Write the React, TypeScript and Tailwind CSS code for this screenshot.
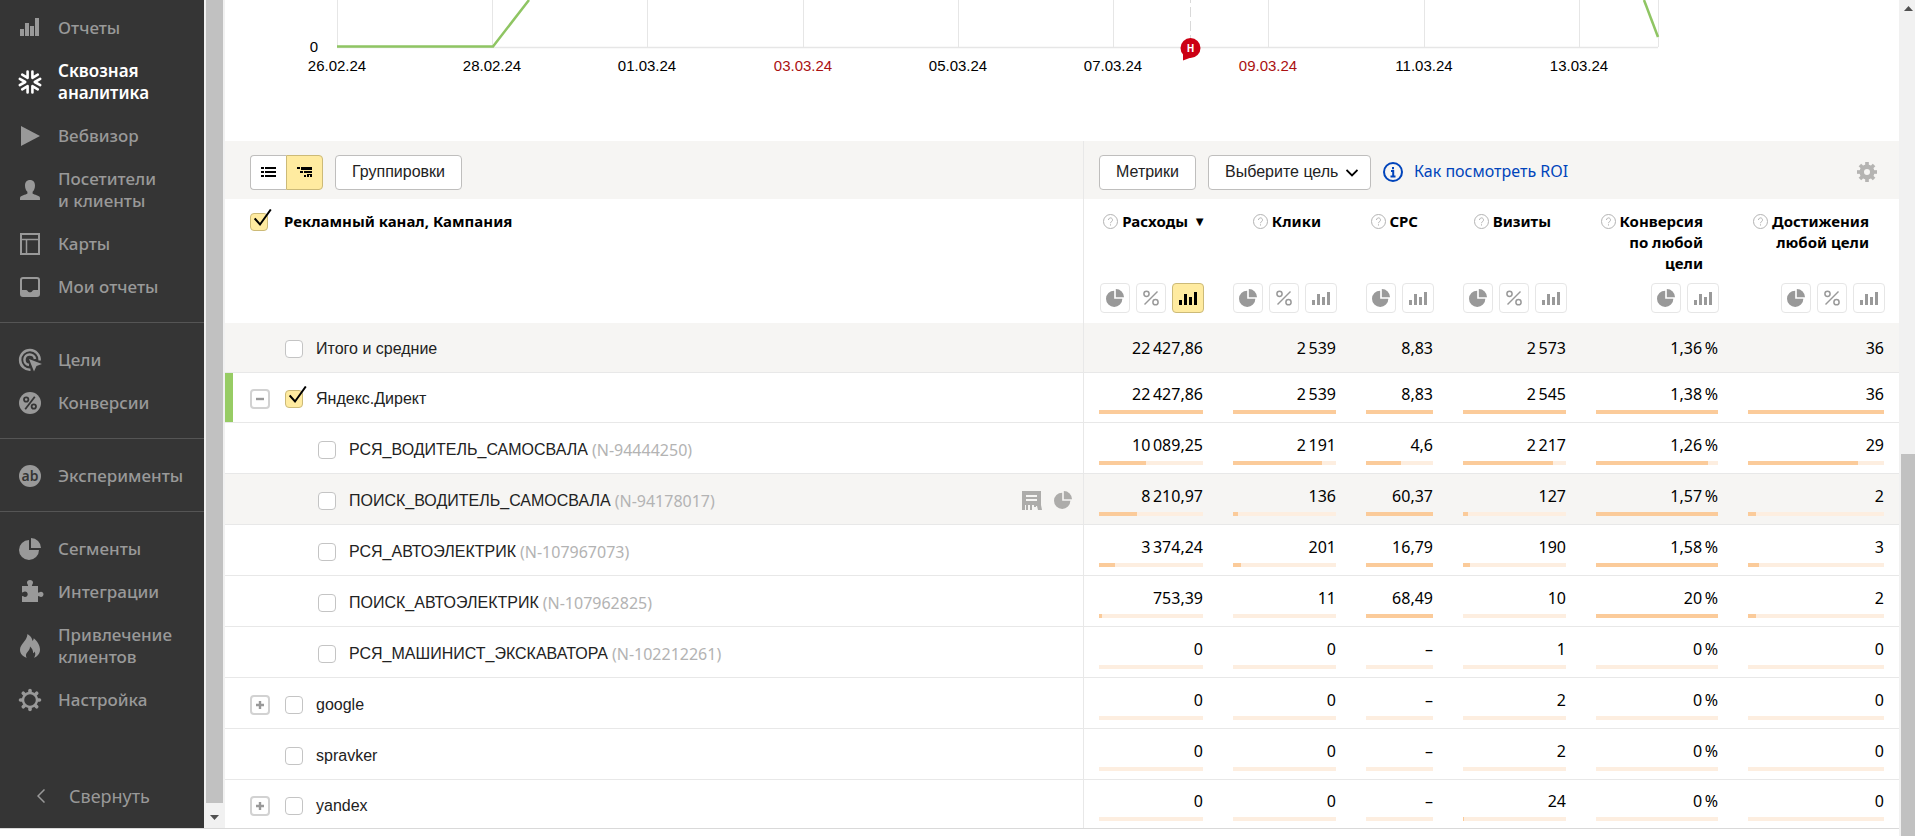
import type { ReactNode } from 'react'

type Mode = 'share' | 'percent' | 'bars'

type Row = {
  id: string
  label: string
  code?: string
  level: 0 | 1
  toggle?: 'open' | 'closed'
  checked?: boolean
  hovered?: boolean
  values: string[]
  bars?: number[]
}

const metrics: { title: string; width: string; modes: Mode[]; sorted?: boolean }[] = [
  { title: 'Расходы', width: 'w-[134px]', modes: ['share', 'percent', 'bars'], sorted: true },
  { title: 'Клики', width: 'w-[133px]', modes: ['share', 'percent', 'bars'] },
  { title: 'CPC', width: 'w-[97px]', modes: ['share', 'bars'] },
  { title: 'Визиты', width: 'w-[133px]', modes: ['share', 'percent', 'bars'] },
  { title: 'Конверсия по любой цели', width: 'w-[152px]', modes: ['share', 'bars'] },
  { title: 'Достижения любой цели', width: 'w-[166px]', modes: ['share', 'percent', 'bars'] },
]

const rows: Row[] = [
  { id: 'total', label: 'Итого и средние', level: 0, values: ['22\u2009427,86', '2\u2009539', '8,83', '2\u2009573', '1,36\u2009%', '36'] },
  { id: 'direct', label: 'Яндекс.Директ', level: 0, toggle: 'open', checked: true, values: ['22\u2009427,86', '2\u2009539', '8,83', '2\u2009545', '1,38\u2009%', '36'], bars: [100, 100, 100, 100, 100, 100] },
  { id: 'c1', label: 'РСЯ_ВОДИТЕЛЬ_САМОСВАЛА', code: '(N-94444250)', level: 1, values: ['10\u2009089,25', '2\u2009191', '4,6', '2\u2009217', '1,26\u2009%', '29'], bars: [45, 86, 52, 87, 92, 81] },
  { id: 'c2', label: 'ПОИСК_ВОДИТЕЛЬ_САМОСВАЛА', code: '(N-94178017)', level: 1, hovered: true, values: ['8\u2009210,97', '136', '60,37', '127', '1,57\u2009%', '2'], bars: [37, 5, 100, 5, 100, 6] },
  { id: 'c3', label: 'РСЯ_АВТОЭЛЕКТРИК', code: '(N-107967073)', level: 1, values: ['3\u2009374,24', '201', '16,79', '190', '1,58\u2009%', '3'], bars: [15, 8, 100, 7, 100, 8] },
  { id: 'c4', label: 'ПОИСК_АВТОЭЛЕКТРИК', code: '(N-107962825)', level: 1, values: ['753,39', '11', '68,49', '10', '20\u2009%', '2'], bars: [3, 0, 100, 0, 100, 6] },
  { id: 'c5', label: 'РСЯ_МАШИНИСТ_ЭКСКАВАТОРА', code: '(N-102212261)', level: 1, values: ['0', '0', '–', '1', '0\u2009%', '0'], bars: [0, 0, 0, 0, 0, 0] },
  { id: 'google', label: 'google', level: 0, toggle: 'closed', values: ['0', '0', '–', '2', '0\u2009%', '0'], bars: [0, 0, 0, 0, 0, 0] },
  { id: 'spravker', label: 'spravker', level: 0, values: ['0', '0', '–', '2', '0\u2009%', '0'], bars: [0, 0, 0, 0, 0, 0] },
  { id: 'yandex', label: 'yandex', level: 0, toggle: 'closed', values: ['0', '0', '–', '24', '0\u2009%', '0'], bars: [0, 0, 0, 1, 0, 0] },
]

const dates = [
  { x: 112, label: '26.02.24' },
  { x: 267, label: '28.02.24' },
  { x: 422, label: '01.03.24' },
  { x: 578, label: '03.03.24', holiday: true },
  { x: 733, label: '05.03.24' },
  { x: 888, label: '07.03.24' },
  { x: 1043, label: '09.03.24', holiday: true },
  { x: 1199, label: '11.03.24' },
  { x: 1354, label: '13.03.24' },
]

function Icon({ children }: { children: ReactNode }) {
  return (
    <svg className="h-[22px] w-[22px] shrink-0 overflow-visible" viewBox="0 0 22 22" fill="currentColor" aria-hidden="true">
      {children}
    </svg>
  )
}

const piePath = (
  <>
    <path d="M10 2v10h10A10 10 0 1 1 10 2Z" />
    <path d="M12 0a10 10 0 0 1 10 10H12Z" />
  </>
)

type NavItem = { label: string; active?: boolean; twoLines?: boolean; icon: ReactNode }

const navGroups: NavItem[][] = [
  [
    { label: 'Отчеты', icon: <path d="M1 12h4v7H1zM6 6h4v13H6zM11 9h4v10h-4zM16 1h4v18h-4z" /> },
    {
      label: 'Сквозная аналитика',
      active: true,
      twoLines: true,
      icon: (
        <g fill="none" stroke="currentColor" strokeWidth="2.600" strokeLinecap="round" strokeLinejoin="round">
          {[0, 60, 120, 180, 240, 300].map((a) => (
            <path key={a} d="M21.200 7.900 15.800 11 21.200 14.100" transform={`rotate(${a} 11 11)`} />
          ))}
        </g>
      ),
    },
    { label: 'Вебвизор', icon: <path d="M2 1l19 10L2 21z" /> },
    {
      label: 'Посетители и клиенты',
      twoLines: true,
      icon: <path d="M11 1c3.200 0 5 2.200 5 5.500 0 2.600-1 5-2.400 6.300v1.700c0 .8 5.400 1.600 7 3.200.4.500.4 1.500.4 3.300H1c0-1.800 0-2.800.4-3.300 1.600-1.600 7-2.400 7-3.200v-1.700C7 11.500 6 9.100 6 6.500 6 3.200 7.800 1 11 1Z" />,
    },
    {
      label: 'Карты',
      icon: (
        <>
          <path d="M2 1h18v20H2z" fill="none" stroke="currentColor" strokeWidth="2" />
          <path d="M2 6.500h18M7.500 6.500V21" fill="none" stroke="currentColor" strokeWidth="1.500" />
        </>
      ),
    },
    {
      label: 'Мои отчеты',
      icon: <path fillRule="evenodd" d="M4 1h14a3 3 0 0 1 3 3v14a3 3 0 0 1-3 3H4a3 3 0 0 1-3-3V4a3 3 0 0 1 3-3Zm0 2a1 1 0 0 0-1 1v10h4c.8 0 1.200.3 1.500.8 1.200 2 3.800 2 5 0 .3-.5.7-.8 1.500-.8h4V4a1 1 0 0 0-1-1Z" />,
    },
  ],
  [
    {
      label: 'Цели',
      icon: (
        <>
          <g fill="none" stroke="currentColor" strokeWidth="2.500">
            <path d="M20.700 11.500A9.800 9.800 0 1 0 11.500 20.700" />
            <path d="M16 10A5.300 5.300 0 1 0 10 16" />
          </g>
          <path d="M10 10l13 5-5.500 2L15 22.500z" />
        </>
      ),
    },
    {
      label: 'Конверсии',
      icon: (
        <>
          <circle cx="11" cy="11" r="11" />
          <g fill="none" stroke="#353535" strokeWidth="1.800">
            <circle cx="7.200" cy="7.500" r="2.200" />
            <circle cx="14.800" cy="14.500" r="2.200" />
            <path d="M15.800 4.800 6.200 17.200" />
          </g>
        </>
      ),
    },
  ],
  [
    {
      label: 'Эксперименты',
      icon: (
        <>
          <circle cx="11" cy="11" r="11" />
          <text x="11" y="16" textAnchor="middle" fontSize="14" fontWeight="600" fill="#353535">ab</text>
        </>
      ),
    },
  ],
  [
    { label: 'Сегменты', icon: piePath },
    {
      label: 'Интеграции',
      icon: <path d="M3 5h5.500c.6 0 .7-.5.400-1C8.400 3 8 2.300 8 1.700 8 .1 9.200-1 11-1s3 1.100 3 2.700c0 .6-.4 1.300-.9 2.300-.3.500-.2 1 .4 1H19v6c0 .6.500.8 1 .5.800-.5 1.300-.8 2-.8 1.400 0 2.500 1.100 2.500 2.600S23.400 16 22 16c-.7 0-1.200-.3-2-.8-.5-.3-1-.1-1 .5V21H3v-5.500c0-.6.500-.7 1-.4.700.5 1.300.9 2 .9 1.600 0 2.700-1.200 2.700-2.800S7.600 10.400 6 10.400c-.7 0-1.300.4-2 .9-.5.300-1 .2-1-.4Z" />,
    },
    {
      label: 'Привлечение клиентов',
      twoLines: true,
      icon: <path d="M8.500-1c2.800 1.700 4.800 4.300 5 7 .8-.7 1.200-1.600 1.200-2.800C18 6 21 10 21 14.500c0 3.800-2.200 7-6 8.200 1.400-1.700 1.700-4 .7-6.200-.3.900-.8 1.400-1.600 1.700.1-2.600-1-5-3.100-6.700.1 2.200-.9 3.700-2.300 5.200-1.900 2-2.300 4-1 6C3.800 21.700 1 18.600 1 14.800 1 9 7.700 6.700 8.500-1Z" />,
    },
    {
      label: 'Настройка',
      icon: (
        <>
          <circle cx="11" cy="11" r="7" fill="none" stroke="currentColor" strokeWidth="2.400" />
          <g stroke="currentColor" strokeWidth="3.600" strokeLinecap="round">
            {[0, 45, 90, 135, 180, 225, 270, 315].map((a) => (
              <path key={a} d="M11 3V1.500" transform={`rotate(${a} 11 11)`} />
            ))}
          </g>
        </>
      ),
    },
  ],
]

function Sidebar() {
  return (
    <aside className="flex w-[204px] shrink-0 flex-col bg-[#353535] text-[17px] leading-[22px] font-medium text-[#999]">
      <nav aria-label="Разделы" className="pt-[6px]">
        {navGroups.map((group, i) => (
          <ul key={i} className={i === 0 ? 'pb-[14px]' : 'border-t border-[#555] pt-[15px] pb-[14px]'}>
            {group.map((item) => (
              <li key={item.label} className={item.twoLines ? 'h-[65px]' : 'h-[43px]'}>
                <a
                  href="#"
                  className={
                    item.active
                      ? 'flex h-full items-center gap-[17px] pl-[19px] font-semibold text-white'
                      : 'flex h-full items-center gap-[17px] pl-[19px] hover:text-white'
                  }
                >
                  <Icon>{item.icon}</Icon>
                  <span className={item.twoLines ? 'w-[110px]' : ''}>{item.label}</span>
                </a>
              </li>
            ))}
          </ul>
        ))}
      </nav>
      <button className="mt-auto mb-5 flex items-center gap-6 pl-[37px] text-[18px] leading-6 font-normal">
        <svg className="h-[14px] w-2" viewBox="0 0 8 14" fill="none" stroke="currentColor" strokeWidth="1.500" aria-hidden="true">
          <path d="M7.500.5 1 7l6.500 6.500" />
        </svg>
        Свернуть
      </button>
    </aside>
  )
}

function Chart() {
  return (
    <svg className="h-[141px] w-full" viewBox="0 0 1674 141" preserveAspectRatio="xMinYMin meet" role="img" aria-label="График расходов">
      <g stroke="#e6e6e6" strokeWidth="1">
        {dates.map((d) => (
          <path key={d.label} d={`M${d.x}.500 0V47`} />
        ))}
        <path d="M1433.500 0V47" />
        <path d="M112 47.500H1433" strokeWidth="1.500" />
        <path d="M965.500-7V38" stroke="#d9d9d9" strokeDasharray="10 4" />
      </g>
      <g fill="none" stroke="#8fc563" strokeWidth="2.500">
        <path d="M112 46.500H268L304 0" />
        <path d="M1419 0 1433 37" />
      </g>
      <g fontFamily="'Liberation Sans', sans-serif" fontSize="15" textAnchor="middle">
        <text x="89" y="52">0</text>
        {dates.map((d) => (
          <text key={d.label} x={d.x} y="71" fill={d.holiday ? '#a11' : '#000'}>
            {d.label}
          </text>
        ))}
      </g>
      <g fill="#cc0014">
        <circle cx="965.500" cy="48" r="10" />
        <path d="M958 52v8.500l8-3z" />
      </g>
      <text x="965.500" y="52" fill="#fff" fontSize="10" fontWeight="700" textAnchor="middle">
        H
      </text>
    </svg>
  )
}

function Toolbar() {
  const button = 'h-[35px] rounded-[4px] border border-[#bfbebd] bg-white text-[16px] text-[#222]'

  return (
    <div className="flex h-[58px] font-['Liberation_Sans',sans-serif]">
      <div className="flex flex-1 items-center gap-3 border-r border-[#e8e8e8] bg-[#f6f5f3] pt-1 pl-[25px]">
        <div className="flex">
          <button aria-label="Список" className="flex h-[35px] w-9 items-center justify-center rounded-l-[4px] border border-r-0 border-[#bfbebd] bg-white">
            <svg className="h-[10px] w-[15px]" viewBox="0 0 15 10" aria-hidden="true">
              <path d="M0 0h3v2H0zM4 0h11v2H4zM0 4h3v2H0zM4 4h11v2H4zM0 8h3v2H0zM4 8h11v2H4z" />
            </svg>
          </button>
          <button aria-label="Дерево" className="flex h-[35px] w-[37px] items-center justify-center rounded-r-[4px] border border-[#ccba78] bg-[#ffeba0]">
            <svg className="h-[10px] w-[15px]" viewBox="0 0 15 10" aria-hidden="true">
              <path d="M0 0h3v2H0zM4 0h11v3H4zM3 4h3v2H3zM7 4h8v2H7zM7 8h2v2H7zM10 7h5v1h-5zM10 8h2v2h-2zM13 8h2v2h-2z" />
            </svg>
          </button>
        </div>
        <button className={`${button} w-[127px]`}>Группировки</button>
      </div>
      <div className="flex w-[815px] items-center bg-[#f6f5f3] pt-1 pr-[22px] pl-[15px]">
        <button className={`${button} w-[97px]`}>Метрики</button>
        <div className="relative ml-3">
          <select aria-label="Цель" className={`${button} w-[163px] appearance-none pl-4`}>
            <option>Выберите цель</option>
          </select>
          <svg className="pointer-events-none absolute top-[14px] right-[13px] h-2 w-3" viewBox="0 0 12 8" fill="none" stroke="#000" strokeWidth="1.800" aria-hidden="true">
            <path d="M.5 1 6 6.500 11.500 1" />
          </svg>
        </div>
        <svg className="ml-3 h-5 w-5" viewBox="0 0 20 20" fill="none" stroke="#04b" strokeWidth="2" aria-hidden="true">
          <circle cx="10" cy="10" r="9" />
          <path d="M8 9h2.200v5M7.500 14.500h5M10 5v2.200" />
        </svg>
        <a href="#" className="ml-[11px] pb-[2px] font-['Noto_Sans',sans-serif] text-[16px] text-[#04b]">
          Как посмотреть ROI
        </a>
        <button aria-label="Настройки таблицы" className="ml-auto text-[#b5b4b2]">
          <svg className="h-5 w-5" viewBox="0 0 22 22" aria-hidden="true">
            <circle cx="11" cy="11" r="5.800" fill="none" stroke="currentColor" strokeWidth="5" />
            <g stroke="currentColor" strokeWidth="4">
              {[0, 45, 90, 135, 180, 225, 270, 315].map((a) => (
                <path key={a} d="M11 4V0" transform={`rotate(${a} 11 11)`} />
              ))}
            </g>
          </svg>
        </button>
      </div>
    </div>
  )
}

function Checkbox({ id, label, checked }: { id: string; label: string; checked?: boolean }) {
  return (
    <span className="relative block h-[18px] w-[18px] shrink-0">
      <input
        id={id}
        type="checkbox"
        aria-label={label}
        defaultChecked={checked}
        className="peer block h-[18px] w-[18px] appearance-none rounded-[4px] border border-[#c4c4c4] bg-white checked:border-[#ccba78] checked:bg-[#ffeba0]"
      />
      <svg
        className="pointer-events-none absolute -top-1 left-1 hidden h-[18px] w-[18px] peer-checked:block"
        viewBox="0 0 18 18"
        fill="none"
        stroke="#000"
        strokeWidth="2"
        aria-hidden="true"
      >
        <path d="M.7 9.500 6 15.500 16.800.5" />
      </svg>
    </span>
  )
}

function ModeButton({ mode, active }: { mode: Mode; active?: boolean }) {
  const size = mode === 'bars' ? 'w-8' : 'w-[30px]'
  const tone = active ? 'border-[#ccba78] bg-[#ffeba0] text-black' : 'border-[#e6e6e6] bg-white text-[#999]'

  return (
    <button aria-label={mode} className={`flex h-[30px] shrink-0 items-center justify-center rounded-[4px] border ${size} ${tone}`}>
      {mode === 'share' && (
        <svg className="h-[18px] w-[18px]" viewBox="0 0 22 22" fill="currentColor" aria-hidden="true">
          {piePath}
        </svg>
      )}
      {mode === 'percent' && (
        <svg className="h-4 w-4" viewBox="0 0 16 16" fill="none" stroke="currentColor" strokeWidth="1.500" aria-hidden="true">
          <circle cx="3.500" cy="3.800" r="2.600" />
          <circle cx="12.500" cy="12.200" r="2.600" />
          <path d="M14.500 1.500 1.500 14.500" />
        </svg>
      )}
      {mode === 'bars' && (
        <svg className="h-[14px] w-[18px]" viewBox="0 0 18 14" fill="currentColor" aria-hidden="true">
          <path d="M0 9h3v5H0zM5 3h3v11H5zM10 6h3v8h-3zM15 1h3v13h-3z" />
        </svg>
      )}
    </button>
  )
}

function HelpIcon() {
  return (
    <svg className="inline-block h-[15px] w-[15px] align-[-2px]" viewBox="0 0 15 15" fill="none" stroke="#b3b3b3" aria-hidden="true">
      <circle cx="7.500" cy="7.500" r="7" />
      <path d="M5.500 6a2 2 0 1 1 3.200 1.500c-.8.600-1.200.9-1.200 1.700M7.500 10.300v1.200" />
    </svg>
  )
}

function CampaignRow({ row }: { row: Row }) {
  const compact = row.id === 'total' || row.id === 'direct' || row.id === 'yandex'
  const shaded = row.hovered || row.id === 'total'

  return (
    <tr className={`${compact ? 'h-[50px]' : 'h-[51px]'} ${shaded ? 'bg-[#f6f5f3]' : 'bg-white'}`}>
      <th scope="row" className="relative border-r border-b border-[#e8e8e8] p-0 pt-[3px] text-left font-normal">
        {row.checked && <span className="absolute inset-y-0 left-0 w-2 bg-[#97cc64]" />}
        <div className={row.level === 1 ? 'flex items-center pl-[93px]' : 'flex items-center pl-[25px]'}>
          {row.level === 0 && (
            <span className="w-[35px]">
              {row.toggle && (
                <button
                  aria-label={row.toggle === 'open' ? 'Свернуть группу' : 'Развернуть группу'}
                  className="flex h-5 w-5 items-center justify-center rounded-[4px] border-2 border-[#d2d2d2] bg-white"
                >
                  <svg className="h-2 w-[10px]" viewBox="0 0 10 10" stroke="#999" strokeWidth="3" aria-hidden="true">
                    <path d={row.toggle === 'open' ? 'M0 5h10' : 'M0 5h10M5 0v10'} />
                  </svg>
                </button>
              )}
            </span>
          )}
          <Checkbox id={row.id} label={row.label} checked={row.checked} />
          <label htmlFor={row.id} className="ml-[13px] font-['Liberation_Sans',sans-serif] text-[16px] leading-5 text-[#222]">
            {row.label}
          </label>
          {row.code && <span className="ml-1 text-[16px] leading-5 text-[#b3b3b3]">{row.code}</span>}
          {row.hovered && (
            <span className="ml-auto flex gap-3 pr-[11px] text-[#adacaa]">
              <svg className="h-5 w-5" viewBox="0 0 20 20" fill="currentColor" aria-hidden="true">
                <path fillRule="evenodd" d="M0 0h19v14l1 5h-4l-1-4h-1v1h-2v-2h-2v5H8v-5H6v5H4v-5H3v5H0zM4 4v2h11V4zM4 8v2h11V8z" />
              </svg>
              <svg className="h-[18px] w-[18px]" viewBox="0 0 22 22" fill="currentColor" aria-hidden="true">
                {piePath}
              </svg>
            </span>
          )}
        </div>
      </th>
      {row.values.map((value, i) => (
        <td
          key={i}
          className={
            row.bars
              ? 'border-b border-[#e8e8e8] px-[15px] pt-0 pb-2 text-right align-bottom'
              : 'border-b border-[#e8e8e8] px-[15px] py-0 text-right align-middle'
          }
        >
          <div className="text-[16px] leading-5">{value}</div>
          {row.bars && (
            <div className="mt-[6px] h-1 bg-[#fdeee0]">
              <div className="h-1 bg-[#fbcb9a]" style={{ width: `${row.bars[i]}%` }} />
            </div>
          )}
        </td>
      ))}
    </tr>
  )
}

function CampaignTable() {
  return (
    <table className="w-full table-fixed border-separate border-spacing-0 text-black">
      <colgroup>
        <col />
        {metrics.map((m) => (
          <col key={m.title} className={m.width} />
        ))}
      </colgroup>
      <thead>
        <tr className="h-[124px]">
          <th scope="col" className="border-r border-[#e8e8e8] pt-3 pl-[25px] text-left align-top">
            <div className="flex items-center gap-4">
              <Checkbox id="all" label="Выбрать все" checked />
              <label htmlFor="all" className="text-[15px] leading-[21px]">
                Рекламный канал, Кампания
              </label>
            </div>
          </th>
          {metrics.map((m) => (
            <th key={m.title} scope="col" className="pt-3 pr-[14px] pb-[10px] pl-[15px] text-right align-top">
              <div className="flex h-[102px] flex-col items-end justify-between">
                <div className="relative pr-4 text-[15px] leading-[21px]">
                  <HelpIcon /> {m.title}
                  {m.sorted && <span className="absolute top-0 -right-[2px] text-[13px]">▼</span>}
                </div>
                <div className="flex gap-[6px]">
                  {m.modes.map((mode) => (
                    <ModeButton key={mode} mode={mode} active={m.sorted && mode === 'bars'} />
                  ))}
                </div>
              </div>
            </th>
          ))}
        </tr>
      </thead>
      <tbody>
        {rows.map((row) => (
          <CampaignRow key={row.id} row={row} />
        ))}
      </tbody>
    </table>
  )
}

export default function App() {
  return (
    <div className="flex h-screen overflow-hidden bg-white font-['Noto_Sans',sans-serif]">
      <div className="mb-[7px] flex min-w-0 flex-1 border-b border-[#d9d9d9]">
        <Sidebar />
        {/* Inner scrollbar */}
        <div className="flex w-[21px] shrink-0 flex-col items-center bg-[#f1f1f1]">
          <div className="w-[17px] flex-1 bg-[#c1c1c1]" />
          <div className="flex h-[25px] items-center pt-1">
            <svg className="h-[5px] w-[9px]" viewBox="0 0 9 5" fill="#505050" aria-hidden="true">
              <path d="M0 0h9L4.500 5z" />
            </svg>
          </div>
        </div>
        <main className="min-w-0 flex-1 overflow-hidden">
          <Chart />
          <Toolbar />
          <CampaignTable />
        </main>
      </div>
      {/* Page scrollbar */}
      <div className="flex w-4 shrink-0 flex-col bg-[#f1f1f1] pl-[2px]">
        <svg className="mt-[6px] ml-[3px] h-[5px] w-[9px]" viewBox="0 0 9 5" fill="#505050" aria-hidden="true">
          <path d="M0 5h9L4.500 0z" />
        </svg>
        <div className="mt-auto h-[382px] bg-[#c1c1c1]" />
      </div>
    </div>
  )
}
